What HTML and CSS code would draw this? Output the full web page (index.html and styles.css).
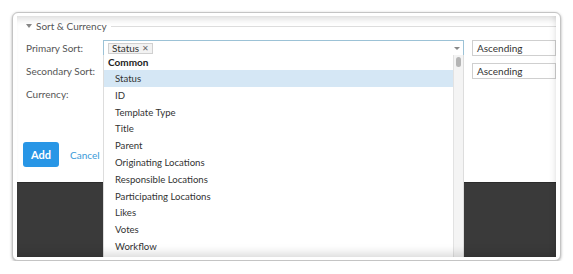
FILE: index.html
```html
<!DOCTYPE html>
<html>
<head>
<meta charset="utf-8">
<link rel="stylesheet" href="styles.css">
</head>
<body>
<div class="frame">
  <div class="inner">
    <div class="panel">
      <div class="legend">
        <span class="caret"></span>
        <span class="legend-text">Sort &amp; Currency</span>
        <span class="legend-line"></span>
      </div>
      <div class="form">
        <div class="label">Primary Sort:</div>
        <div class="select primary">
          <span class="tag">Status <span class="tag-x">✕</span></span>
          <span class="arrow"></span>
        </div>
        <div class="select order">Ascending</div>

        <div class="label">Secondary Sort:</div>
        <div class="select plain"></div>
        <div class="select order">Ascending</div>

        <div class="label">Currency:</div>
        <div></div>
        <div></div>
      </div>
      <div class="actions">
        <button class="btn-add">Add</button>
        <span class="cancel">Cancel</span>
      </div>
    </div>
    <div class="dark"></div>

    <div class="menu">
      <div class="menu-list">
        <div class="group">Common</div>
        <div class="item active">Status</div>
        <div class="item">ID</div>
        <div class="item">Template Type</div>
        <div class="item">Title</div>
        <div class="item">Parent</div>
        <div class="item">Originating Locations</div>
        <div class="item">Responsible Locations</div>
        <div class="item">Participating Locations</div>
        <div class="item">Likes</div>
        <div class="item">Votes</div>
        <div class="item">Workflow</div>
      </div>
      <div class="scrollbar"><div class="thumb"></div></div>
    </div>
    <div class="shade"></div>
  </div>
</div>
</body>
</html>
```

FILE: styles.css
```css
* { box-sizing: border-box; }
html, body { margin: 0; padding: 0; background: #fff; }
body {
  font-family: "Lato", "Open Sans", sans-serif;
  font-size: 9.6px;
  color: #444;
}
.frame {
  margin: 12px 0 0 12px;
  width: 549px;
  height: 249px;
  border: 1px solid #c4c4c4;
  border-radius: 6px;
  padding: 3px 4px 4px 4px;
  background: #fff;
  box-shadow: 0 1px 3px rgba(0,0,0,0.35);
}
.inner {
  position: relative;
  height: 241px;
  overflow: hidden;
  display: flex;
  flex-direction: column;
}
.panel {
  height: 166px;
  background: #fff;
  padding-top: 3px;
}
.legend {
  display: flex;
  align-items: center;
  height: 14px;
  padding-left: 9px;
}
.caret {
  width: 0; height: 0;
  border-left: 3px solid transparent;
  border-right: 3px solid transparent;
  border-top: 4px solid #888;
  margin-right: 4px;
}
.legend-text { color: #555; font-size: 10px; }
.legend-line {
  flex: 1;
  height: 1px;
  background: #ddd;
  margin-left: 4px;
}
.form {
  display: grid;
  grid-template-columns: 69px 361px 1fr;
  column-gap: 8px;
  row-gap: 7px;
  grid-auto-rows: 16px;
  padding-left: 9px;
  margin-top: 7px;
}
.label {
  display: flex;
  align-items: center;
  color: #555;
  font-size: 10px;
  white-space: nowrap;
}
.select {
  border: 1px solid #cfcfcf;
  background: #fff;
  position: relative;
  display: flex;
  align-items: center;
  padding-left: 4px;
  font-size: 10px;
  white-space: nowrap;
}
.primary { border-color: #9cc2d6; }
.order { color: #333; }
.tag {
  display: inline-flex;
  align-items: center;
  height: 11px;
  border: 1px solid #d0d0d0;
  background: #f2f2f2;
  padding: 0 3px 0 3px;
  color: #333;
  font-size: 10px;
}
.tag-x { font-size: 8px; color: #666; margin-left: 3px; }
.arrow {
  position: absolute;
  right: 3px;
  top: 6px;
  width: 0; height: 0;
  border-left: 3px solid transparent;
  border-right: 3px solid transparent;
  border-top: 3px solid #888;
}
.actions {
  display: flex;
  align-items: center;
  padding-left: 6px;
  margin-top: 40px;
}
.btn-add {
  width: 36px;
  height: 25px;
  border: 0;
  border-radius: 3px;
  background: #2896e6;
  color: #fff;
  font-family: inherit;
  font-size: 11px;
  font-weight: bold;
  padding: 0;
}
.cancel { color: #3a9ad9; margin-left: 11px; font-size: 10px; }
.dark {
  flex: 1;
  background: #3a3a3a;
  border-top: 1px solid #2b2b2b;
}
.menu {
  position: absolute;
  left: 86px;
  top: 39px;
  width: 361px;
  height: 210px;
  background: #fff;
  border-left: 1px solid #ddd;
  border-right: 1px solid #ddd;
  display: flex;
}
.menu-list { flex: 1; }
.group {
  height: 15px;
  line-height: 15px;
  padding-left: 4px;
  font-weight: bold;
  font-size: 10px;
  color: #222;
}
.item {
  height: 16.8px;
  line-height: 17.4px;
  padding-left: 11px;
  color: #333;
}
.item.active { background: #d5e7f5; }
.scrollbar {
  width: 10px;
  background: #f4f4f4;
  border-left: 1px solid #e2e2e2;
  padding-top: 2px;
}
.thumb {
  width: 5px;
  height: 10px;
  margin-left: 2px;
  border-radius: 3px;
  background: #b5b5b5;
}
.shade {
  position: absolute;
  left: 0; right: 0; top: 0; bottom: 0;
  pointer-events: none;
  box-shadow: inset 0 8px 7px -5px rgba(0,0,0,0.14), inset 0 -12px 10px -8px rgba(0,0,0,0.14), inset -6px 0 6px -5px rgba(0,0,0,0.1);
}
```
